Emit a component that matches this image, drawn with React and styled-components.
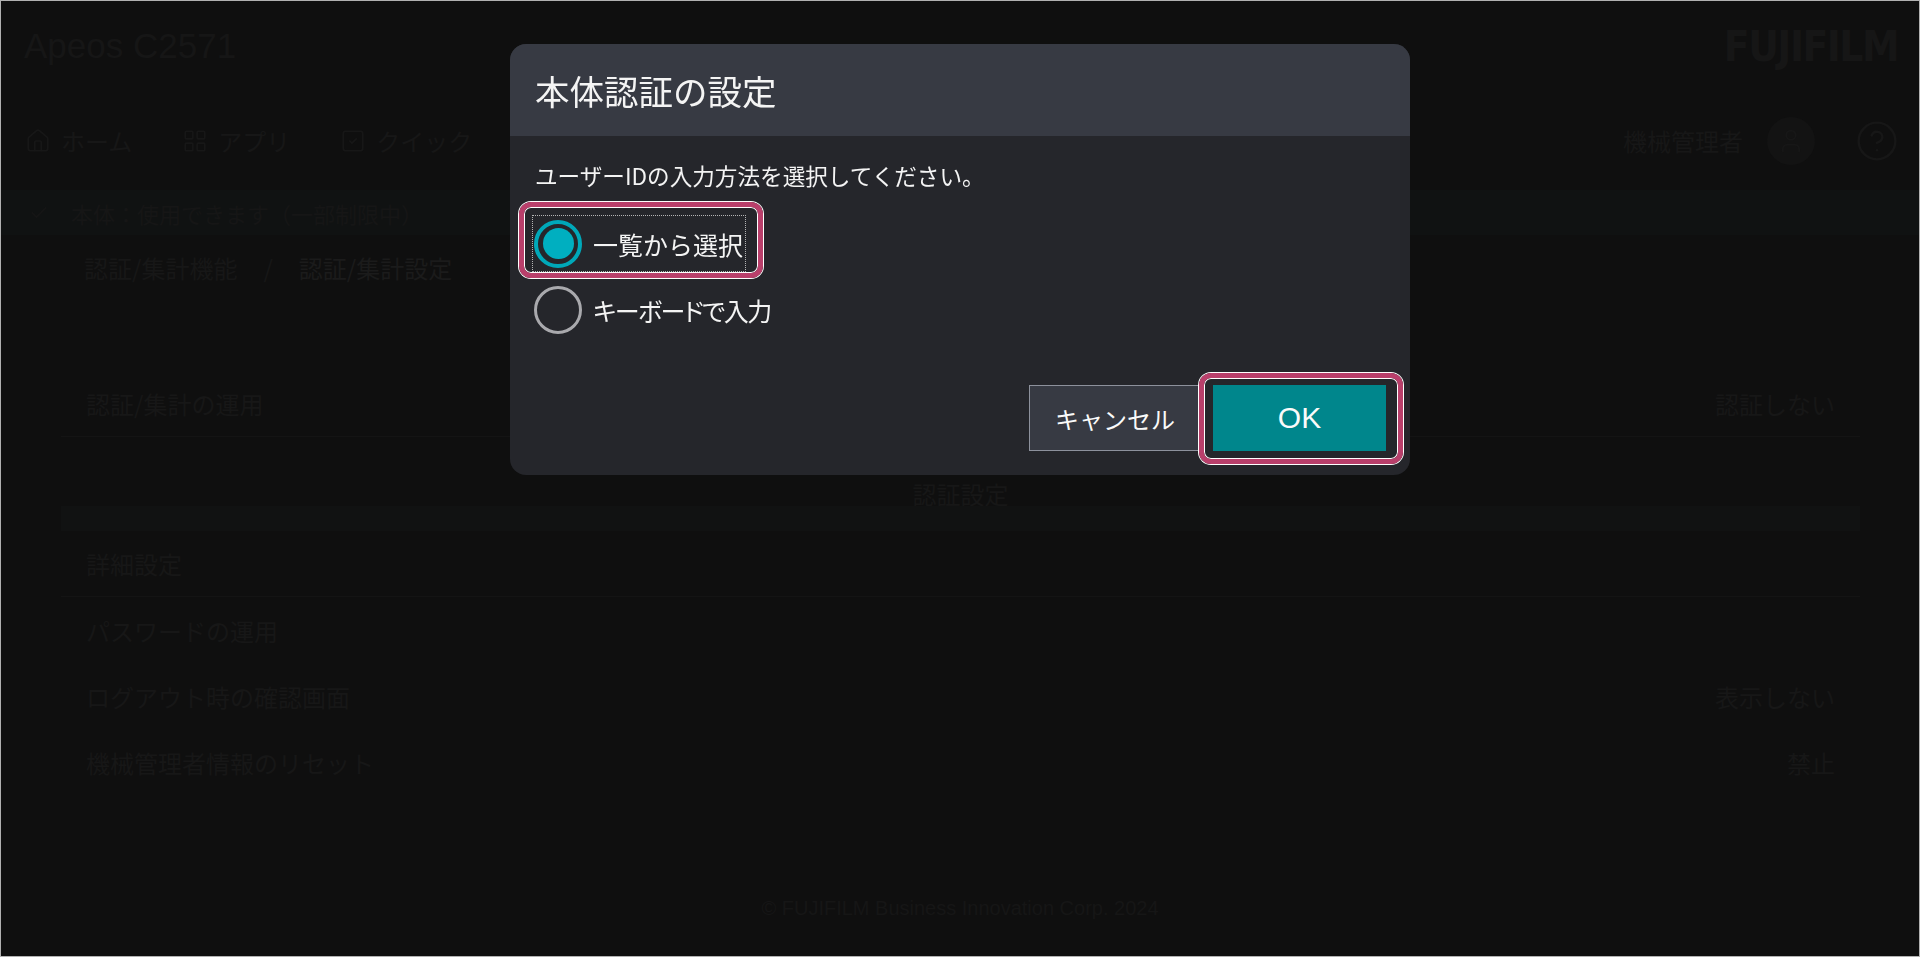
import React from "react";
import styled, { createGlobalStyle } from "styled-components";
import { Home, LayoutGrid, SquareCheck, User, HelpCircle, Check } from "lucide-react";

const GlobalStyle = createGlobalStyle`
  html, body { margin: 0; padding: 0; background: #0f0f0f; }
  * { box-sizing: border-box; }
  body { font-family: "Noto Sans CJK JP", "Noto Sans", sans-serif; }
`;

const faint = "#171717";

const Page = styled.div`
  height: 957px;
  border: 1px solid #b1b1b1;
  background: #0f0f0f;
  display: flex;
  flex-direction: column;
  overflow: hidden;
  color: ${faint};
`;

const TopBar = styled.header`
  height: 90px;
  display: flex;
  align-items: center;
  justify-content: space-between;
  padding: 0 21px 0 23px;
`;

const Model = styled.div`
  font-family: "Liberation Sans", Arial, sans-serif;
  font-size: 35px;
  font-weight: 300;
  color: #161616;
`;

const Logo = styled.div`
  font-family: "DejaVu Sans Condensed", "Liberation Sans", sans-serif;
  font-weight: 700;
  font-size: 42px;
  letter-spacing: -1.5px;
  color: #161616;
`;

const NavBar = styled.nav`
  height: 99px;
  display: flex;
  align-items: center;
  justify-content: space-between;
  padding: 0 20px 0 24px;
`;

const NavGroup = styled.div`
  display: flex;
  align-items: center;
  gap: ${(p) => p.$gap ?? 50}px;
`;

const NavItem = styled.div`
  display: flex;
  align-items: center;
  gap: 10px;
  font-size: 24px;
`;

const UserName = styled.div`
  font-size: 24px;
  margin-right: 24px;
`;

const Avatar = styled.div`
  width: 48px;
  height: 48px;
  border-radius: 50%;
  background: #131313;
  display: flex;
  align-items: center;
  justify-content: center;
  margin-right: 40px;
`;

const StatusBand = styled.div`
  height: 45px;
  background: #101212;
  display: flex;
  align-items: center;
  gap: 22px;
  padding-left: 28px;
  font-size: 22px;
  color: #161616;
`;

const Breadcrumb = styled.div`
  height: 64px;
  display: flex;
  align-items: center;
  gap: 26px;
  padding-left: 83px;
  font-size: 24px;
`;

const Crumb = styled.span`
  color: ${(p) => (p.$current ? "#1b1b1b" : faint)};
`;

const List = styled.div`
  margin: 72px 59px 0 60px;
  display: flex;
  flex-direction: column;
`;

const Row = styled.div`
  height: 66px;
  display: flex;
  align-items: center;
  justify-content: space-between;
  padding: 0 25px 0 25px;
  font-size: 24px;
  border-bottom: ${(p) => (p.$line ? "1px solid #141414" : "none")};
`;

const SectionTitle = styled.div`
  height: 69px;
  display: flex;
  align-items: flex-end;
  justify-content: center;
  font-size: 24px;
  line-height: 24px;
`;

const SectionBand = styled.div`
  height: 25px;
  background: #111212;
`;

const Footer = styled.footer`
  margin-top: auto;
  height: 96px;
  display: flex;
  align-items: center;
  justify-content: center;
  font-family: "Liberation Sans", Arial, sans-serif;
  font-size: 20px;
  color: #161616;
`;

/* ---------- Dialog ---------- */

const Backdrop = styled.div`
  position: fixed;
  inset: 0;
  display: flex;
  justify-content: center;
  align-items: flex-start;
  padding-top: 44px;
`;

const Dialog = styled.div`
  width: 900px;
  border-radius: 16px;
  overflow: hidden;
  background: #25262b;
  color: #f4f4f4;
`;

const DialogHeader = styled.div`
  height: 92px;
  background: #373a43;
  display: flex;
  align-items: center;
  padding: 0 25px;
`;

const Title = styled.h2`
  margin: 0;
  font-size: 34.5px;
  font-weight: 400;
  line-height: 1;
`;

const DialogBody = styled.div`
  padding: 23px 24px 24px 23px;
  display: flex;
  flex-direction: column;
`;

const Instruction = styled.p`
  margin: 0 0 0 2px;
  font-size: 22.6px;
  line-height: 33px;
`;

const RadioGroup = styled.div`
  margin-top: 24px;
  display: flex;
  flex-direction: column;
  align-items: flex-start;
  gap: 11px;
`;

const RadioLabel = styled.label`
  position: relative;
  height: 55px;
  display: inline-flex;
  align-items: center;
  gap: 11px;
  padding: 0 2px 0 1px;
  font-size: 25px;
  cursor: pointer;
  outline: ${(p) => (p.$focused ? "1px dotted #b5b5b5" : "none")};

  &::after {
    content: "";
    display: ${(p) => (p.$focused ? "block" : "none")};
    position: absolute;
    top: -14px;
    left: -14px;
    right: -18px;
    bottom: -7px;
    border: 5px solid #b93f6b;
    border-radius: 12px;
    box-shadow: 0 0 0 1px #ffffff, inset 0 0 0 1px #ffffff;
    pointer-events: none;
  }
`;

const LabelText = styled.span`
  font-feature-settings: ${(p) => (p.$proportional ? '"palt"' : "normal")};
  letter-spacing: ${(p) => (p.$proportional ? "-1.5px" : "0")};
`;

const RadioCircle = styled.span`
  width: 48px;
  height: 48px;
  flex: none;
  border-radius: 50%;
  border: ${(p) => (p.$checked ? "4px solid #00a8b9" : "3px solid #a9a9ad")};
  display: flex;
  align-items: center;
  justify-content: center;

  &::before {
    content: "";
    display: ${(p) => (p.$checked ? "block" : "none")};
    width: 31px;
    height: 31px;
    border-radius: 50%;
    background: #00afc0;
  }
`;

const Actions = styled.div`
  margin-top: 48px;
  display: flex;
  justify-content: flex-end;
  gap: 12px;
`;

const Button = styled.button`
  position: relative;
  width: ${(p) => (p.$primary ? 173 : 172)}px;
  height: 66px;
  border: ${(p) => (p.$primary ? "none" : "1px solid #8d919c")};
  background: ${(p) => (p.$primary ? "#00868c" : "#373a43")};
  color: #fafafa;
  font-family: ${(p) =>
    p.$primary
      ? '"Liberation Sans", Arial, sans-serif'
      : '"Noto Sans CJK JP", sans-serif'};
  font-size: ${(p) => (p.$primary ? 30 : 24)}px;
  padding: 0;
  cursor: pointer;

  &::after {
    content: "";
    display: ${(p) => (p.$focused ? "block" : "none")};
    position: absolute;
    top: -12px;
    left: -14px;
    right: -17px;
    bottom: -13px;
    border: 5px solid #b93f6b;
    border-radius: 12px;
    box-shadow: 0 0 0 1px #ffffff, inset 0 0 0 1px #ffffff;
    pointer-events: none;
  }
`;

const options = [
  { id: "list", label: "一覧から選択", proportional: false },
  { id: "keyboard", label: "キーボードで入力", proportional: true },
];

export default function App() {
  const [value, setValue] = React.useState("list");
  return (
    <>
      <GlobalStyle />
      <Page>
        <TopBar>
          <Model>Apeos C2571</Model>
          <Logo>FUJIFILM</Logo>
        </TopBar>
        <NavBar>
          <NavGroup $gap={50}>
            <NavItem>
              <Home size={26} strokeWidth={1.5} />
              ホーム
            </NavItem>
            <NavItem>
              <LayoutGrid size={26} strokeWidth={1.5} />
              アプリ
            </NavItem>
            <NavItem>
              <SquareCheck size={26} strokeWidth={1.5} />
              クイック
            </NavItem>
          </NavGroup>
          <NavGroup $gap={0}>
            <UserName>機械管理者</UserName>
            <Avatar>
              <User size={28} strokeWidth={1.5} />
            </Avatar>
            <HelpCircle size={44} strokeWidth={1.3} />
          </NavGroup>
        </NavBar>
        <StatusBand>
          <Check size={20} strokeWidth={2} />
          本体：使用できます（一部制限中）
        </StatusBand>
        <Breadcrumb>
          <Crumb>認証/集計機能</Crumb>
          <Crumb>/</Crumb>
          <Crumb $current>認証/集計設定</Crumb>
        </Breadcrumb>
        <List>
          <Row $line>
            <span>認証/集計の運用</span>
            <span>認証しない</span>
          </Row>
          <SectionTitle>認証設定</SectionTitle>
          <SectionBand />
          <Row $line>
            <span>詳細設定</span>
          </Row>
          <Row>
            <span>パスワードの運用</span>
          </Row>
          <Row>
            <span>ログアウト時の確認画面</span>
            <span>表示しない</span>
          </Row>
          <Row>
            <span>機械管理者情報のリセット</span>
            <span>禁止</span>
          </Row>
        </List>
        <Footer>© FUJIFILM Business Innovation Corp. 2024</Footer>
      </Page>

      <Backdrop>
        <Dialog role="dialog" aria-labelledby="dlg-title">
          <DialogHeader>
            <Title id="dlg-title">本体認証の設定</Title>
          </DialogHeader>
          <DialogBody>
            <Instruction>ユーザーIDの入力方法を選択してください。</Instruction>
            <RadioGroup role="radiogroup">
              {options.map((o) => (
                <RadioLabel
                  key={o.id}
                  $focused={o.id === "list"}
                  onClick={() => setValue(o.id)}
                >
                  <RadioCircle $checked={value === o.id} />
                  <LabelText $proportional={o.proportional}>{o.label}</LabelText>
                </RadioLabel>
              ))}
            </RadioGroup>
            <Actions>
              <Button>キャンセル</Button>
              <Button $primary $focused>
                OK
              </Button>
            </Actions>
          </DialogBody>
        </Dialog>
      </Backdrop>
    </>
  );
}
